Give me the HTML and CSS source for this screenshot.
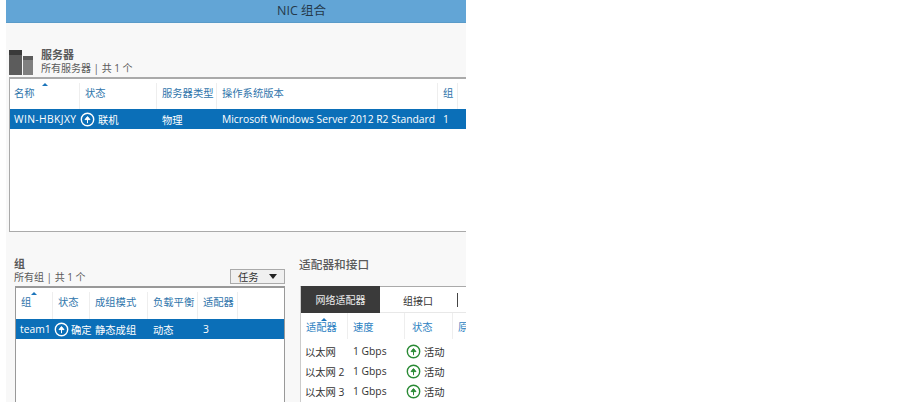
FILE: index.html
```html
<!DOCTYPE html>
<html lang="zh">
<head>
<meta charset="utf-8">
<title>NIC 组合</title>
<link rel="stylesheet" href="styles.css">
</head>
<body>
<div class="window">
  <div class="titlebar">NIC 组合</div>
  <div class="content">
    <section class="servers">
      <div class="panel-head">
        <svg class="server-icon" width="24" height="26" viewBox="0 0 24 26">
          <rect x="0" y="1" width="13" height="25" fill="#5c5c5c"/>
          <rect x="0" y="1" width="13" height="5" fill="#3a3a3a"/>
          <rect x="14" y="7" width="10" height="19" fill="#808080"/>
          <rect x="14" y="7" width="10" height="4" fill="#5c5c5c"/>
        </svg>
        <div class="panel-text">
          <div class="panel-title">服务器</div>
          <div class="panel-sub">所有服务器 | 共 1 个</div>
        </div>
      </div>
      <div class="grid-box server-box">
        <div class="row head server-cols">
          <div class="cell sorted">名称</div>
          <div class="cell">状态</div>
          <div class="cell">服务器类型</div>
          <div class="cell">操作系统版本</div>
          <div class="cell">组</div>
        </div>
        <div class="row selected server-cols">
          <div class="cell server-name">WIN-HBKJXY</div>
          <div class="cell status"><svg class="up" width="15" height="15" viewBox="0 0 15 15"><circle cx="7.5" cy="7.5" r="6.2" fill="none" stroke="#fff" stroke-width="1.4"/><path d="M7.5 11.2V6.5M5 7.6l2.5-3 2.5 3z" fill="#fff" stroke="#fff"/></svg>联机</div>
          <div class="cell">物理</div>
          <div class="cell">Microsoft Windows Server 2012 R2 Standard</div>
          <div class="cell">1</div>
        </div>
      </div>
    </section>
    <div class="lower">
      <section class="groups">
        <div class="groups-head">
          <div>
            <div class="panel-title">组</div>
            <div class="panel-sub">所有组 | 共 1 个</div>
          </div>
          <div class="tasks">任务<span class="caret"></span></div>
        </div>
        <div class="grid-box group-box">
          <div class="row head group-cols">
            <div class="cell sorted">组</div>
            <div class="cell">状态</div>
            <div class="cell">成组模式</div>
            <div class="cell">负载平衡</div>
            <div class="cell">适配器</div>
          </div>
          <div class="row selected group-cols">
            <div class="cell">team1</div>
            <div class="cell status"><svg class="up" width="15" height="15" viewBox="0 0 15 15"><circle cx="7.5" cy="7.5" r="6.2" fill="none" stroke="#fff" stroke-width="1.4"/><path d="M7.5 11.2V6.5M5 7.6l2.5-3 2.5 3z" fill="#fff" stroke="#fff"/></svg>确定</div>
            <div class="cell">静态成组</div>
            <div class="cell">动态</div>
            <div class="cell">3</div>
          </div>
        </div>
      </section>
      <section class="adapters">
        <div class="panel-title adapters-title">适配器和接口</div>
        <div class="adapter-box">
          <div class="tabs">
            <div class="tab active">网络适配器</div>
            <div class="tab">组接口</div>
            <div class="tab-sep"></div>
          </div>
          <div class="row head adapter-cols">
            <div class="cell sorted">适配器</div>
            <div class="cell">速度</div>
            <div class="cell">状态</div>
            <div class="cell">原</div>
          </div>
          <div class="adapter-rows">
            <div class="row adapter-cols plain">
              <div class="cell">以太网</div><div class="cell">1 Gbps</div>
              <div class="cell status"><svg class="up" width="15" height="15" viewBox="0 0 15 15"><circle cx="7.5" cy="7.5" r="6.2" fill="none" stroke="#2a8a35" stroke-width="1.4"/><path d="M7.5 11.2V6.5M5 7.6l2.5-3 2.5 3z" fill="#2a8a35" stroke="#2a8a35"/></svg>活动</div>
            </div>
            <div class="row adapter-cols plain">
              <div class="cell">以太网 2</div><div class="cell">1 Gbps</div>
              <div class="cell status"><svg class="up" width="15" height="15" viewBox="0 0 15 15"><circle cx="7.5" cy="7.5" r="6.2" fill="none" stroke="#2a8a35" stroke-width="1.4"/><path d="M7.5 11.2V6.5M5 7.6l2.5-3 2.5 3z" fill="#2a8a35" stroke="#2a8a35"/></svg>活动</div>
            </div>
            <div class="row adapter-cols plain">
              <div class="cell">以太网 3</div><div class="cell">1 Gbps</div>
              <div class="cell status"><svg class="up" width="15" height="15" viewBox="0 0 15 15"><circle cx="7.5" cy="7.5" r="6.2" fill="none" stroke="#2a8a35" stroke-width="1.4"/><path d="M7.5 11.2V6.5M5 7.6l2.5-3 2.5 3z" fill="#2a8a35" stroke="#2a8a35"/></svg>活动</div>
            </div>
          </div>
        </div>
      </section>
    </div>
  </div>
</div>
</body>
</html>
```
FILE: styles.css
```css
* { box-sizing: border-box; }
html, body { margin: 0; height: 100%; background: #fff; overflow: hidden; }
body {
  font-family: "Open Sans", "Noto Sans CJK SC", sans-serif;
  font-size: 10.3px;
  color: #333;
}
.window { width: 460px; height: 402px; margin-left: 6px; background: #f8f8f8; overflow: hidden; }
.titlebar {
  height: 23px;
  background: #62a5d6;
  border-bottom: 1px solid #5a9bc9;
  text-align: center;
  line-height: 21px;
  font-size: 12.5px;
  color: #25394a;
  padding-left: 131px;
  margin-bottom: 1px;
}
.content { padding-left: 3px; }
.servers { padding-top: 25px; }
.panel-head { display: flex; height: 28px; gap: 8px; align-items: flex-end; }
.panel-text { padding-bottom: 2px; }
.server-icon { display: block; margin-bottom: 2px; }
.panel-title { font-weight: 700; font-size: 11px; line-height: 14px; color: #5a5a5a; }
.panel-sub { font-size: 10px; line-height: 13px; color: #5a5a5a; }
.grid-box { background: #fff; border: 1px solid #aaa; border-top-width: 2px; border-right: 0; }
.server-box { height: 155px; padding-top: 4px; }
.row { display: grid; align-items: center; }
.head { height: 26px; color: #2f75ab; }
.head .cell { height: 100%; display: flex; align-items: center; border-right: 1px solid #eee; padding: 0 0 8px 5px; white-space: nowrap; }
.selected { height: 20px; background: #0b6fb8; color: #fff; }
.selected .cell { padding-left: 5px; white-space: nowrap; }
.selected .cell:first-child { padding-left: 4px; }
.selected .status { padding-left: 0; }
.selected .server-name { letter-spacing: 0.4px; }
.status { display: flex; align-items: center; gap: 3px; }
.up { display: block; flex: none; }
.sorted { position: relative; }
.sorted::before {
  content: "";
  position: absolute;
  top: 0;
  left: 32px;
  border: 3px solid transparent;
  border-top: 0;
  border-bottom: 3px solid #1b75bb;
}
.server-cols { grid-template-columns: 70px 77px 60px 221px 20px; }
.server-cols .cell:first-child { padding-left: 4px; }
.group-cols { grid-template-columns: 37px 37px 58px 50px 40px; }
.lower { display: flex; gap: 14px; padding-top: 22px; }
.groups { width: 276px; flex: none; padding-left: 5px; }
.groups-head { display: flex; justify-content: space-between; align-items: flex-end; height: 30px; margin-bottom: 2px; }
.tasks {
  width: 55px; height: 15px; border: 1px solid #aaa; background: #f0f0f0;
  display: flex; align-items: center; justify-content: space-between;
  padding: 0 7px; color: #333;
}
.caret { border: 4px solid transparent; border-bottom: 0; border-top: 5px solid #222; }
.group-box { height: 120px; margin-left: 1px; border: 1px solid #999; border-top-width: 2px; border-bottom: 0; padding-top: 4px; }
.group-box .head { height: 27px; }
.group-box .sorted::before { left: 15px; top: 0; }
.group-box .selected .status { padding-left: 1px; gap: 2px; }
.adapters { flex: 1; min-width: 0; }
.adapters-title { height: 32px; line-height: 20px; font-weight: 500; font-size: 11.7px; }
.adapter-box { margin-left: 1px; background: #fff; border-top: 1px solid #aaa; border-left: 1px solid #ccc; height: 120px; }
.tabs { display: flex; align-items: center; height: 26px; border-bottom: 1px solid #e8e8e8; }
.tab { padding: 3px 23px 0; line-height: 23px; font-size: 10px; }
.tab.active { width: 79px; background: #3a3a3a; color: #eee; padding: 3px 0 0; text-align: center; height: 27px; margin-top: -1px; }
.tab-sep { width: 1px; height: 14px; background: #444; margin-left: 1px; }
.adapter-cols { grid-template-columns: 47px 57px 48px 14px; }
.head.adapter-cols { height: 26px; color: #2d82c2; }
.head.adapter-cols .cell { padding-bottom: 0; }
.head.adapter-cols .cell:nth-child(3) { padding-left: 7px; }
.head.adapter-cols .sorted::before { left: 20px; top: 5px; }
.adapter-rows { padding-top: 2px; }
.plain { height: 20px; }
.plain .cell { padding-left: 5px; white-space: nowrap; }
.plain .cell:first-child { padding-left: 4px; }
.plain .status { padding-left: 1px; }
```
